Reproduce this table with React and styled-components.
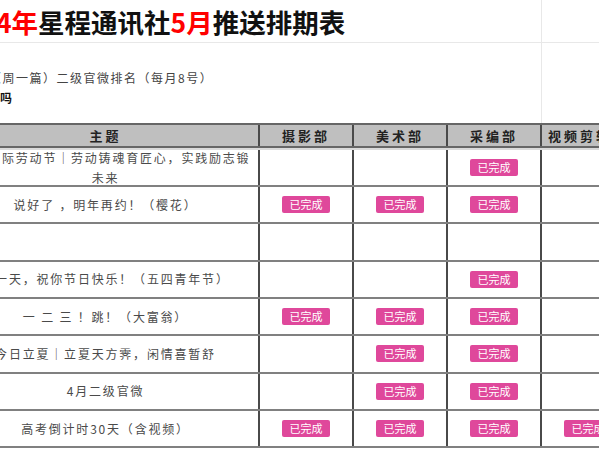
import React from "react";
import styled, { createGlobalStyle } from "styled-components";

const GlobalStyle = createGlobalStyle`
  html, body {
    margin: 0;
    padding: 0;
    background: #fff;
  }
`;

const Viewport = styled.div`
  width: 599px;
  height: 449px;
  overflow: hidden;
  background: #fff;
  font-family: "Noto Sans CJK SC", "Liberation Sans", sans-serif;
`;

// the sheet is scrolled a bit to the right, so it starts left of the window
const Sheet = styled.div`
  margin-left: -47px;
  width: 760px;
`;

const TopRow = styled.div`
  display: flex;
  height: ${props => props.h}px;
  box-sizing: border-box;
  border-bottom: ${props => (props.line ? "1px solid #e8e8e8" : "none")};
`;

const Merged = styled.div`
  width: 589px;
  flex: none;
  box-sizing: border-box;
  border-right: 1px solid #e8e8e8;
  overflow: hidden;
`;

const Title = styled.h1`
  margin: 0;
  text-indent: -4px;
  font-size: 26.5px;
  line-height: 43px;
  font-weight: 700;
  color: #111;
  white-space: nowrap;
`;

const Red = styled.span`
  color: #ff0000;
`;

const Notes = styled.div`
  padding: 25px 0 0 47px;
  font-size: 12px;
  line-height: 19.5px;
  color: #444;
  letter-spacing: 1.5px;
  white-space: nowrap;
`;

const NoteLine = styled.div`
  text-indent: ${props => props.indent || 0}px;
  font-weight: ${props => (props.bold ? 700 : 400)};
  color: ${props => (props.bold ? "#111" : "#444")};
`;

const Table = styled.div`
  display: flex;
  flex-direction: column;
`;

const cols = "307px 94px 94px 94px 94px 1fr";

const HeadRow = styled.div`
  display: grid;
  grid-template-columns: ${cols};
  height: 23px;
  box-sizing: border-box;
  border-top: 2px solid #666;
  background: #bfbfbf;
`;

const HeadCell = styled.div`
  display: flex;
  align-items: center;
  justify-content: center;
  box-sizing: border-box;
  border-right: ${props => (props.last ? "none" : "2px solid #4a4a4a")};
  font-size: 13px;
  font-weight: 700;
  letter-spacing: 3px;
  color: #222;
  white-space: nowrap;
  overflow: hidden;
`;

const FreezeBand = styled.div`
  height: 2px;
  border-top: 2px solid #666;
  background: #dadada;
`;

const Row = styled.div`
  display: grid;
  grid-template-columns: ${cols};
  height: ${props => (props.first ? 37 : 37.33)}px;
  box-sizing: border-box;
  border-bottom: 2px solid #808080;
`;

const Cell = styled.div`
  display: flex;
  align-items: center;
  justify-content: center;
  box-sizing: border-box;
  border-right: ${props => (props.last ? "none" : "2px solid #4a4a4a")};
  overflow: hidden;
`;

const Topic = styled.div`
  font-size: 12px;
  line-height: 20px;
  letter-spacing: 1.8px;
  color: #4a4a4a;
  text-align: center;
  white-space: nowrap;
`;

const Badge = styled.span`
  display: inline-flex;
  align-items: center;
  justify-content: center;
  width: 48px;
  height: 17px;
  border-radius: 2px;
  background: #df489b;
  color: #fff;
  font-size: 11px;
  line-height: 17px;
  flex: none;
`;

const heads = ["主题", "摄影部", "美术部", "采编部", "视频剪辑部"];

const rows = [
  { topic: ["五一国际劳动节｜劳动铸魂育匠心，实践励志锻", "未来"], done: [0, 0, 1, 0] },
  { topic: ["说好了  ，明年再约！（樱花）"], done: [1, 1, 1, 0] },
  { topic: [""], done: [0, 0, 0, 0] },
  { topic: ["这一天，祝你节日快乐！（五四青年节）"], done: [0, 0, 1, 0] },
  { topic: ["一 二 三 ！跳！（大富翁）"], done: [1, 1, 1, 0] },
  { topic: ["今日立夏｜立夏天方霁，闲情喜暂舒"], done: [0, 1, 1, 0] },
  { topic: ["4月二级官微"], done: [0, 1, 1, 0] },
  { topic: ["高考倒计时30天（含视频）"], done: [1, 1, 1, 1] },
];

export default function App() {
  return (
    <Viewport>
      <GlobalStyle />
      <Sheet>
        <TopRow h={43} line>
          <Merged>
            <Title>
              <Red>2024年</Red>星程通讯社<Red>5月</Red>推送排期表
            </Title>
          </Merged>
        </TopRow>
        <TopRow h={80}>
          <Merged>
            <Notes>
              <NoteLine indent={-11}>（周一篇）二级官微排名（每月8号）</NoteLine>
              <NoteLine bold>吗</NoteLine>
            </Notes>
          </Merged>
        </TopRow>
        <Table>
          <HeadRow>
            {heads.map(h => (
              <HeadCell key={h}>{h}</HeadCell>
            ))}
            <HeadCell last />
          </HeadRow>
          <FreezeBand />
          {rows.map((r, i) => (
            <Row key={i} first={i === 0}>
              <Cell>
                <Topic>
                  {r.topic.map((line, j) => (
                    <div key={j}>{line}</div>
                  ))}
                </Topic>
              </Cell>
              {r.done.map((d, j) => (
                <Cell key={j}>{d ? <Badge>已完成</Badge> : null}</Cell>
              ))}
              <Cell last />
            </Row>
          ))}
        </Table>
      </Sheet>
    </Viewport>
  );
}
